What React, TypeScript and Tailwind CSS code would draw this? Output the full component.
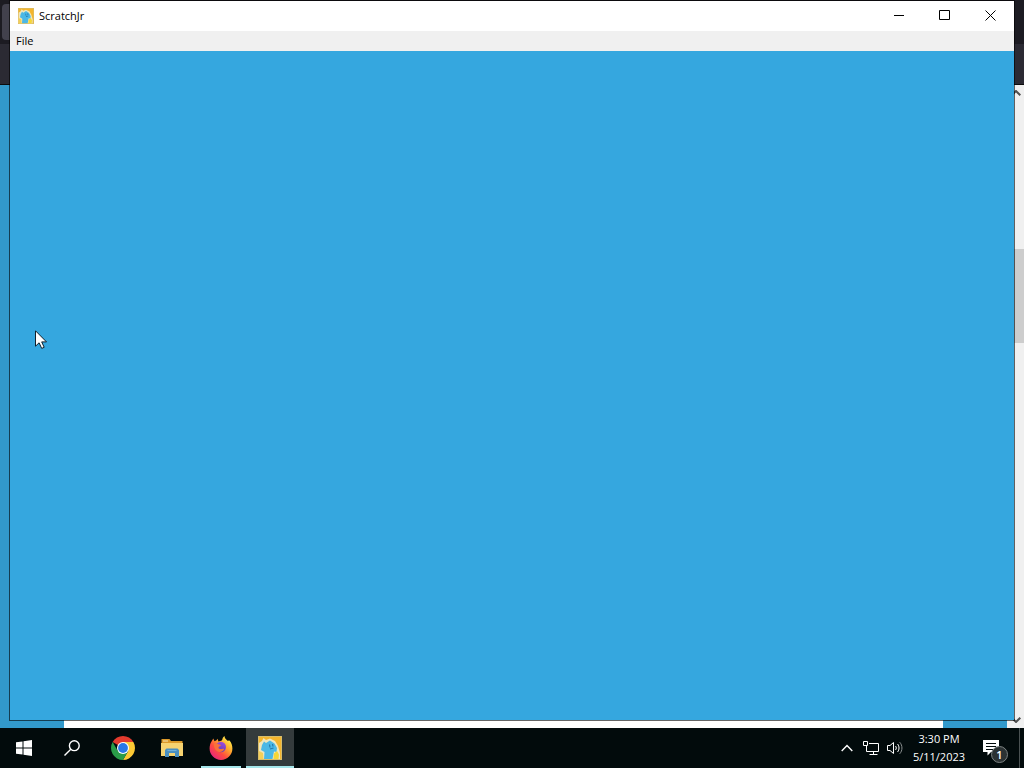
import type { ReactNode } from 'react';

// ---- icons ----

function ScratchJrIcon({ size }: { size: number }) {
  return (
    <svg width={size} height={size} viewBox="0 0 24 24" aria-hidden="true">
      <rect width="24" height="24" fill="#d8bd6a" />
      <rect x="1" y="1" width="22" height="22" fill="#f4b52e" />
      <path d="M1 7 4 5l1.500-3L8 4l4-1.500L17 5l3 5 2 7v6H1z" fill="#efe6bd" />
      <path d="M6 5.500 8 7l4-2.500 4.500 3L19 12l-.5 4-2.500-.5L14.500 23H6l.5-7L3 14l1-5z" fill="#4bb8e6" />
      <path d="M16 17.500 19 15l2 3.500-.5 4.500h-5z" fill="#f6d636" />
      <path d="M1 15l4 2 .5 6H1z" fill="#f3cf58" />
      <path d="M11.500 8.500l.5 3M14.500 8l.5 2.500M12 13l3.500-1" stroke="#2579ae" strokeWidth="1.200" fill="none" />
    </svg>
  );
}

function WindowsIcon() {
  return (
    <svg width="16" height="16" viewBox="0 0 16 16" fill="#fff" aria-hidden="true">
      <path d="M0 2.300 6.500 1.400V7.500H0zM7.500 1.200 16 0v7.500H7.500zM0 8.500h6.500v6.100L0 13.700zM7.500 8.500H16V16l-8.500-1.200z" />
    </svg>
  );
}

function SearchIcon() {
  return (
    <svg width="16" height="16" viewBox="0 0 16 16" fill="none" stroke="#fff" strokeWidth="1.400" aria-hidden="true">
      <circle cx="10.300" cy="5.700" r="4.900" />
      <path d="M6.800 9.200.5 15.500" />
    </svg>
  );
}

function ChromeIcon() {
  return (
    <svg width="24" height="24" viewBox="0 0 24 24" aria-hidden="true">
      <path d="M12 12 1.610 6A12 12 0 0 1 22.390 6z" fill="#e33b2e" />
      <path d="M12 6h10.390A12 12 0 0 1 12 24l5.200-9z" fill="#fcc934" />
      <path d="M6.800 15 1.610 6A12 12 0 0 0 12 24l5.200-9z" fill="#2a9c48" />
      <circle cx="12" cy="12" r="6" fill="#fff" />
      <circle cx="12" cy="12" r="4.900" fill="#2a78e6" />
    </svg>
  );
}

function FolderIcon() {
  return (
    <svg width="22" height="20" viewBox="0 0 22 20" aria-hidden="true">
      <path d="M.5 1h8L10 3h11.500v5H.5z" fill="#dc9a2a" />
      <path d="M2 2.500h5v1H2z" fill="#f4e4b0" />
      <path d="M0 5h22v13H0z" fill="#f6d371" />
      <path d="M4 19v-7l1.500-1.500h11L18 12v7h-4v-4H8v4z" fill="#4a8fc0" />
      <path d="M6.500 12h9v1h-9z" fill="#6fb0dc" />
    </svg>
  );
}

function FirefoxIcon() {
  return (
    <svg width="24" height="24" viewBox="0 0 24 24" aria-hidden="true">
      <defs>
        <linearGradient id="fx-body" x1="0.850" y1="0.100" x2="0.150" y2="0.900">
          <stop offset="0" stopColor="#fff04a" />
          <stop offset="0.350" stopColor="#ffa32e" />
          <stop offset="0.650" stopColor="#ff4c3f" />
          <stop offset="1" stopColor="#e8267c" />
        </linearGradient>
        <linearGradient id="fx-globe" x1="0.700" y1="0" x2="0.300" y2="1">
          <stop offset="0" stopColor="#a04be0" />
          <stop offset="1" stopColor="#5a3fae" />
        </linearGradient>
      </defs>
      <path
        d="M2.500 5.500 4.300 2.500 5.500 5.200 7.500 4.200 8.500 2.800 9.500 5.500C12 5 13 4.500 13.300 3.500 13.500 2 14.300.8 15.500 0c0 2 1.200 3.200 3 4.700l2-.2c2 2 2.900 5 2.900 8A11.400 11.400 0 1 1 .6 12.500C.6 10 1.200 7.500 2.500 5.500z"
        fill="url(#fx-body)"
      />
      <circle cx="11.800" cy="11" r="5.200" fill="url(#fx-globe)" />
      <path d="M5 7.500c2-.8 3.500 0 4.500.7l2.500.8c0 1-2 1.300-2.500 2.200-.3 1 .8 1.800 2 1.800 1.500 0 2.500-.7 3.800 0-1 2.300-3 3.300-5.300 3C7 15.500 4.500 12 5 7.500z" fill="#f8713a" />
    </svg>
  );
}

function NetworkIcon() {
  return (
    <svg width="16" height="14" viewBox="0 0 16 14" fill="none" stroke="#fff" aria-hidden="true">
      <path d="M6 2.500h9.500v8h-12V5" />
      <path d="M.5.500h4v4h-4zM10.500 10.500v3M6.500 13.500h8" />
    </svg>
  );
}

function VolumeIcon() {
  return (
    <svg width="16" height="14" viewBox="0 0 16 14" fill="none" stroke="#fff" aria-hidden="true">
      <path d="M.5 4.500h2.500L6.500 1.500v11L3 9.500H.5z" />
      <path d="M8.500 5c1 1.200 1 2.800 0 4M10.500 3c2 2.200 2 5.800 0 8" />
      <path d="M12.700 1.200c3 3.200 3 8.400 0 11.600" stroke="#8b9090" />
    </svg>
  );
}

function CursorIcon() {
  return (
    <svg width="13" height="20" viewBox="0 0 13 20" className="absolute left-[25px] top-[329px]" aria-hidden="true">
      <path d="M.5.800v15.400l3.600-3.400 2.600 5.600 2.500-1.100-2.500-5.400h4.800z" fill="#fff" stroke="#10202c" />
    </svg>
  );
}

// ---- browser behind the app window ----

function ScrollArrow({ down = false }: { down?: boolean }) {
  return (
    <button aria-label={down ? 'Scroll down' : 'Scroll up'} className="flex h-4 w-full shrink-0 items-center justify-center">
      <svg width="10" height="6" viewBox="0 0 10 6" fill="none" stroke="#505050" strokeWidth="2" aria-hidden="true">
        <path d={down ? 'M.7.700 5 5 9.300.700' : 'M.7 5.300 5 1 9.300 5.300'} />
      </svg>
    </button>
  );
}

function BrowserWindow() {
  return (
    <div className="absolute inset-0 flex flex-col">
      <div className="flex h-11 shrink-0 items-center bg-[#1c1b22] px-0.5">
        <div className="h-9 w-40 rounded bg-[#42414d]" />
      </div>
      <div className="h-[41px] shrink-0 border-b border-[#0c0c0d] bg-[#2b2a33]" />
      <div className="flex min-h-0 flex-1">
        <div className="flex flex-1 bg-[#3299cb] px-16">
          <div className="flex-1 bg-white" />
        </div>
        <div className="flex w-[17px] flex-col bg-[#f0f0f0]">
          <ScrollArrow />
          <div className="flex flex-1 flex-col">
            <div className="grow-[148]" />
            <div className="h-[94px] bg-[#cdcdcd]" />
            <div className="grow-[369]" />
          </div>
          <ScrollArrow down />
        </div>
      </div>
    </div>
  );
}

// ---- app window ----

function CaptionButton({ label, children }: { label: string; children: ReactNode }) {
  return (
    <button aria-label={label} className="flex h-7 w-[46px] items-center justify-center hover:bg-gray-200">
      <svg width="12" height="12" viewBox="0 0 12 12" fill="none" stroke="#000" aria-hidden="true">
        {children}
      </svg>
    </button>
  );
}

function AppWindow() {
  return (
    <div className="absolute inset-x-[9px] bottom-[7px] top-0 flex flex-col border border-black/60 bg-[#35a7df] bg-clip-padding">
      <header className="flex h-[30px] shrink-0 bg-white pl-2">
        <div className="flex flex-1 items-center gap-[5px]">
          <ScratchJrIcon size={16} />
          <h1 className="text-[11px] leading-4">ScratchJr</h1>
        </div>
        <CaptionButton label="Minimize">
          <path d="M1 6.500h10" />
        </CaptionButton>
        <CaptionButton label="Maximize">
          <path d="M.5 1.500h10v9H.5z" />
        </CaptionButton>
        <CaptionButton label="Close">
          <path d="M.5 1.500l10 10M10.500 1.500l-10 10" />
        </CaptionButton>
      </header>
      <nav className="flex h-5 shrink-0 items-center bg-[#f0f0f0]">
        <button className="px-1.5 text-[11px] leading-4">File</button>
      </nav>
      <main className="flex-1" />
      <CursorIcon />
    </div>
  );
}

// ---- taskbar ----

type TaskState = 'idle' | 'open' | 'active';

function TaskButton({ label, state = 'idle', children }: { label: string; state?: TaskState; children: ReactNode }) {
  return (
    <button
      aria-label={label}
      className={`relative flex w-12 items-center justify-center ${state === 'active' ? 'bg-[#343b3c]' : ''}`}
    >
      {children}
      {state !== 'idle' && (
        <span className={`absolute bottom-0 h-0.5 bg-[#a5e6ea] ${state === 'active' ? 'inset-x-0' : 'inset-x-1'}`} />
      )}
    </button>
  );
}

function Taskbar() {
  return (
    <footer className="flex h-10 shrink-0 bg-[#020b0c] text-white">
      <TaskButton label="Start"><WindowsIcon /></TaskButton>
      <TaskButton label="Search"><SearchIcon /></TaskButton>
      <div className="ml-[3px] flex gap-px">
        <TaskButton label="Google Chrome"><ChromeIcon /></TaskButton>
        <TaskButton label="File Explorer"><FolderIcon /></TaskButton>
        <TaskButton label="Firefox" state="open"><FirefoxIcon /></TaskButton>
        <TaskButton label="ScratchJr" state="active"><ScratchJrIcon size={24} /></TaskButton>
      </div>
      <div className="ml-auto flex">
        <button aria-label="Show hidden icons" className="flex w-6 items-center justify-center">
          <svg width="12" height="8" viewBox="0 0 12 8" fill="none" stroke="#fff" strokeWidth="1.400" aria-hidden="true">
            <path d="M.7 7 6 1.500 11.300 7" />
          </svg>
        </button>
        <button aria-label="Network" className="flex w-6 items-center justify-center"><NetworkIcon /></button>
        <button aria-label="Volume" className="flex w-6 items-center justify-center"><VolumeIcon /></button>
        <button className="w-16 text-center text-[11px] leading-[18px]">
          <span className="block">3:30 PM</span>
          <span className="block">5/11/2023</span>
        </button>
        <button aria-label="Notifications" className="relative flex w-12 items-center pl-3">
          <svg width="16" height="16" viewBox="0 0 16 16" aria-hidden="true">
            <path d="M0 0h16v12H8l-3.500 3.500V12H0z" fill="#fff" />
            <path d="M3 3.500h10M3 6.500h10M3 9.500h7" stroke="#020b0c" />
          </svg>
          <span className="absolute left-5 top-[18px] flex size-[17px] items-center justify-center rounded-full border border-[#7c8282] bg-[#2b3233] text-[11px] font-semibold leading-4">
            1
          </span>
        </button>
        <button aria-label="Show desktop" className="w-[5px] border-l border-[#4a5152]" />
      </div>
    </footer>
  );
}

export default function App() {
  return (
    <div className="flex h-screen flex-col overflow-hidden font-['Open_Sans','Noto_Sans',sans-serif] text-black">
      <div className="relative min-h-0 flex-1">
        <BrowserWindow />
        <AppWindow />
      </div>
      <Taskbar />
    </div>
  );
}
